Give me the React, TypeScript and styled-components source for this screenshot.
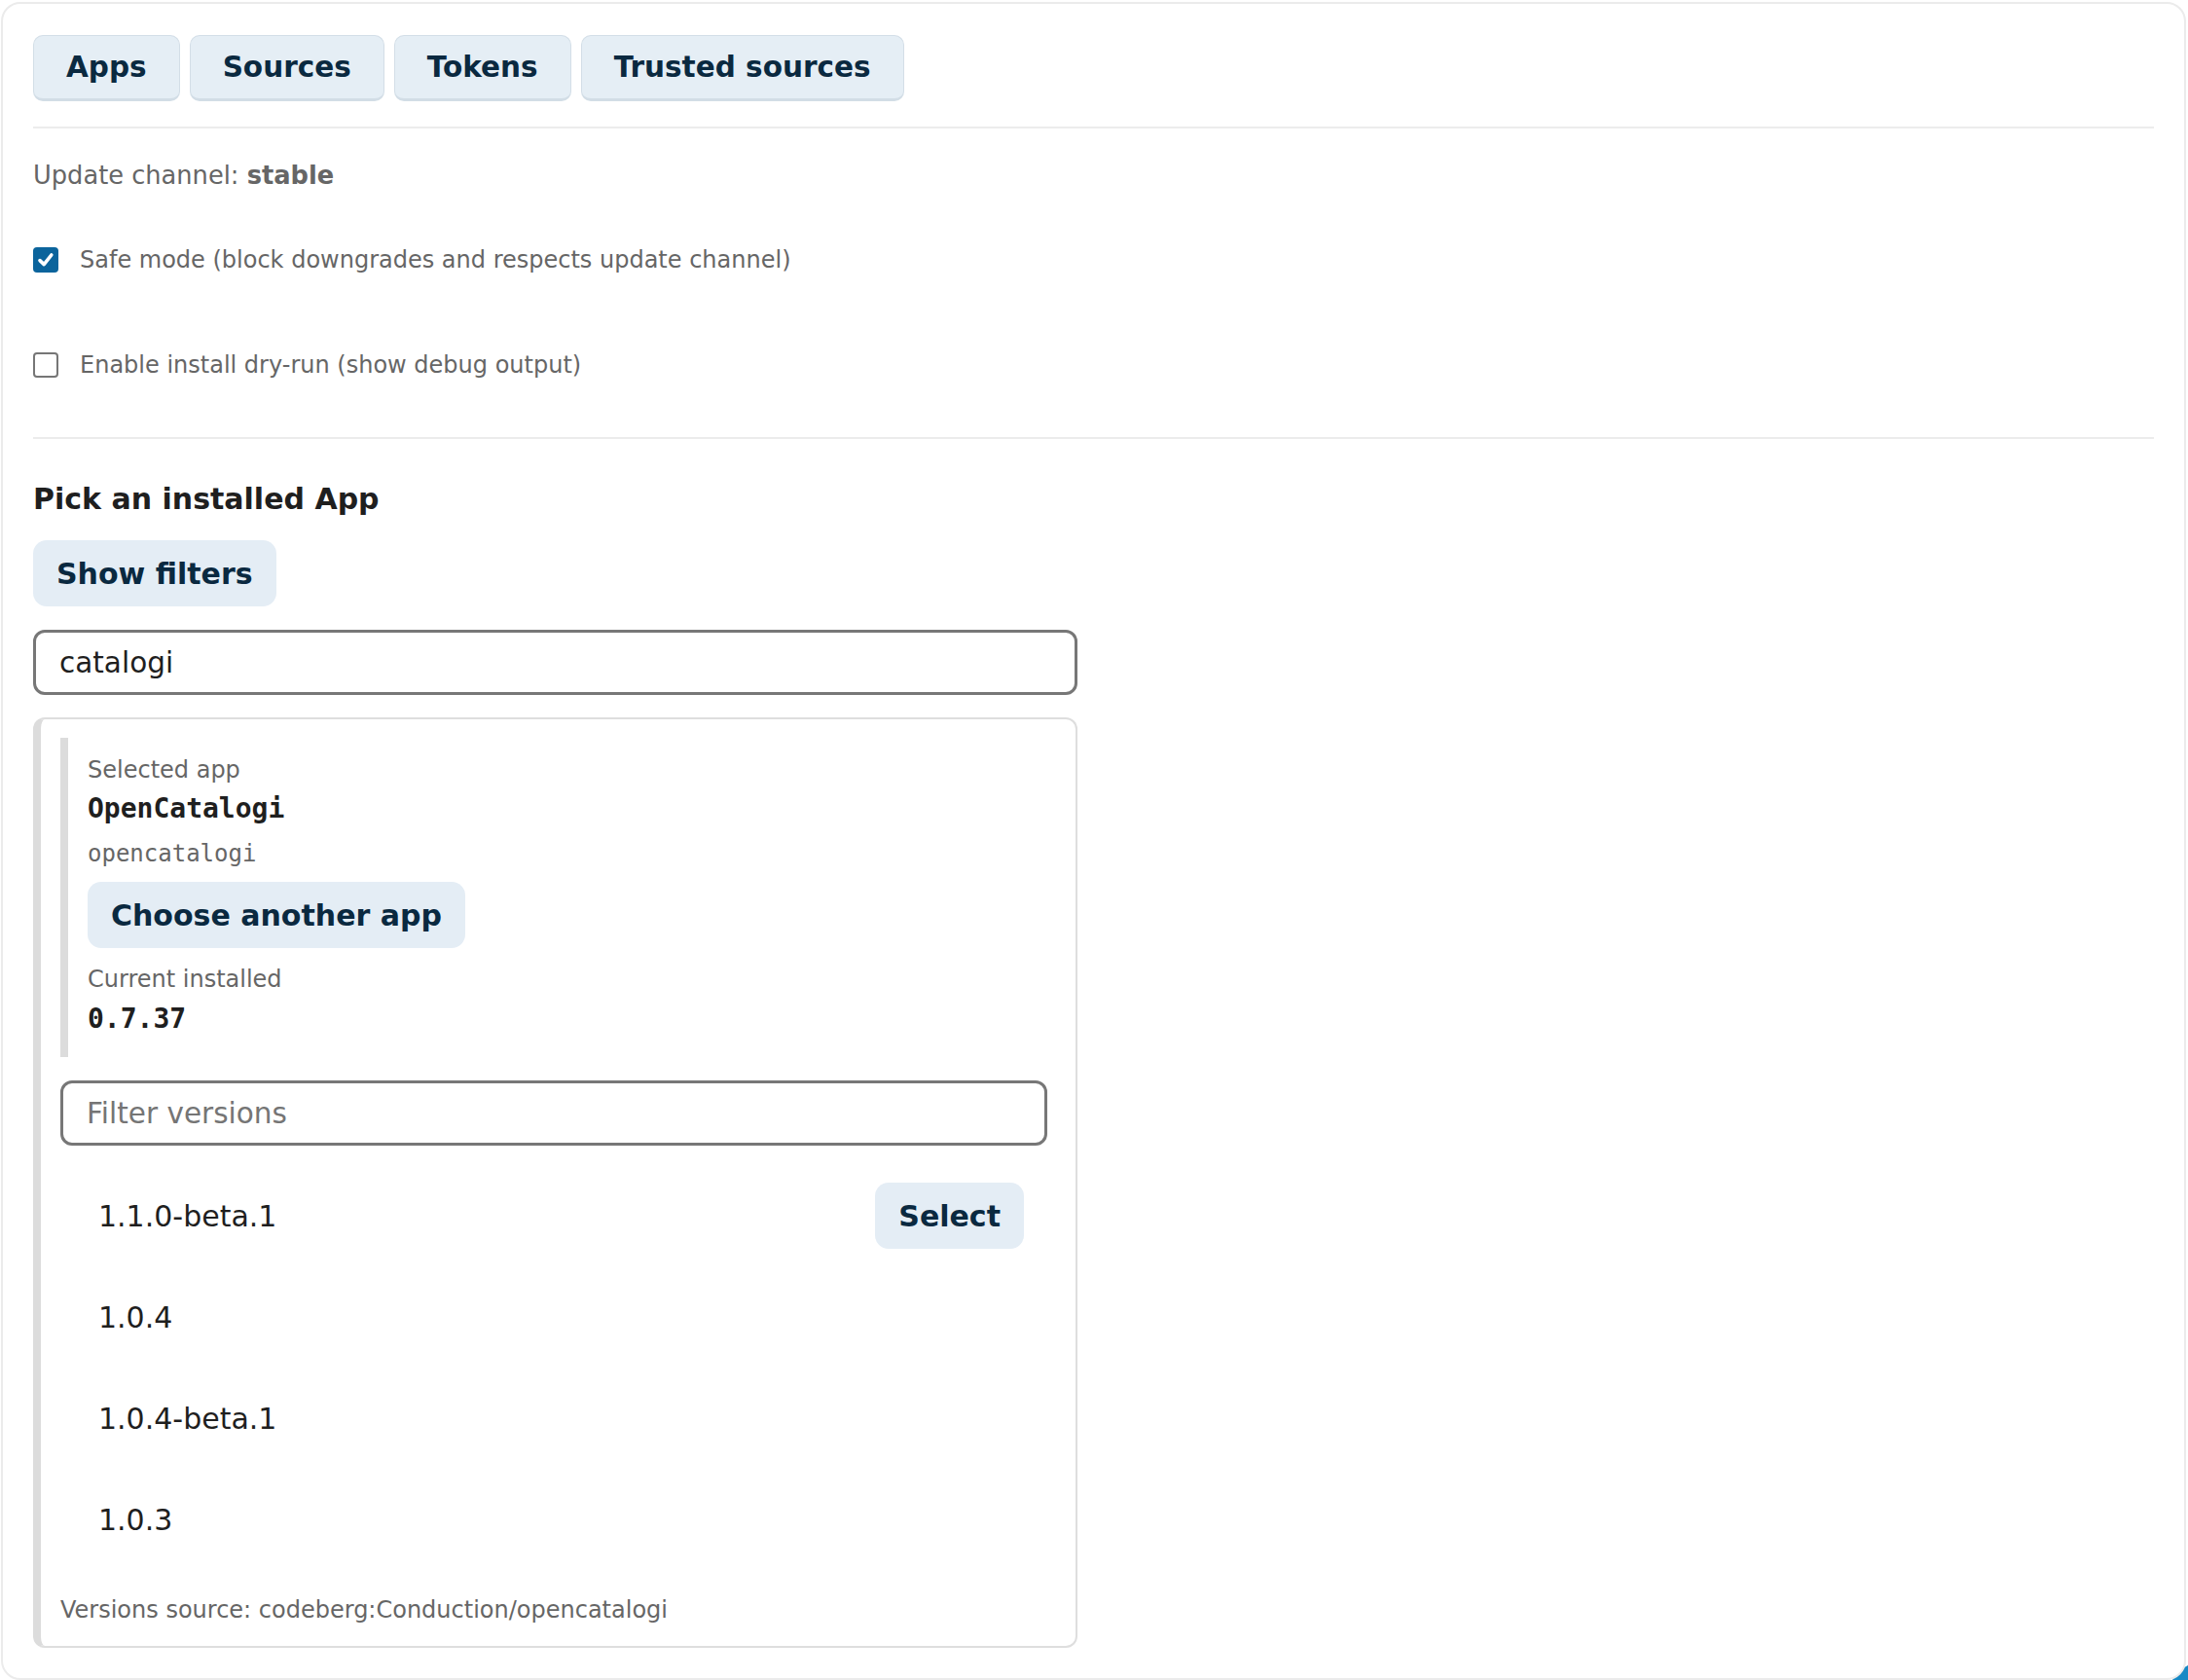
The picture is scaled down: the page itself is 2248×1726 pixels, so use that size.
import React, { useState } from "react";
import styled, { createGlobalStyle } from "styled-components";

const GlobalStyle = createGlobalStyle`
  html, body {
    margin: 0;
    padding: 0;
    background: #ffffff;
  }
  body {
    font-family: "DejaVu Sans", Verdana, sans-serif;
    color: #1f1f1f;
  }
  * { box-sizing: border-box; }
`;

const Page = styled.div`
  padding: 2px 2px 2px 1px;
`;

const Panel = styled.section`
  position: relative;
  z-index: 1;
  background: #ffffff;
  border: 2px solid #ebebeb;
  border-radius: 20px;
  padding: 32px 31px 31px 31px;
  display: flex;
  flex-direction: column;
  align-items: flex-start;
`;

const TabBar = styled.nav`
  display: flex;
  gap: 10px;
`;

const Tab = styled.button`
  height: 68px;
  padding: 0 33px;
  border: 1px solid #d3dee7;
  border-bottom-width: 3px;
  border-bottom-color: #d2dde6;
  border-radius: 10px;
  background: #e5eef5;
  color: #0a2940;
  font-family: "DejaVu Sans", sans-serif;
  font-weight: 700;
  font-size: 29.5px;
  cursor: pointer;
`;

const Rule = styled.hr<{ $gap: number }>`
  align-self: stretch;
  margin: ${(p) => p.$gap}px 0 0;
  border: none;
  height: 2px;
  background: #ececec;
`;

const ChannelLine = styled.p`
  margin: 29px 0 0;
  font-size: 25.7px;
  line-height: 38px;
  color: #666666;
  strong { font-weight: 700; }
`;

const CheckRow = styled.label<{ $gap: number }>`
  margin-top: ${(p) => p.$gap}px;
  display: flex;
  align-items: center;
  gap: 22px;
  font-size: 24px;
  line-height: 36px;
  color: #666666;
  cursor: pointer;
`;

const HiddenInput = styled.input`
  position: absolute;
  opacity: 0;
  width: 0;
  height: 0;
`;

const Box = styled.span<{ $on: boolean }>`
  width: 26px;
  height: 26px;
  border-radius: 4px;
  display: inline-flex;
  align-items: center;
  justify-content: center;
  background: ${(p) => (p.$on ? "#0b649c" : "#ffffff")};
  border: ${(p) => (p.$on ? "none" : "2px solid #767676")};
`;

const Heading = styled.h2`
  margin: 42px 0 0;
  font-size: 30px;
  line-height: 39px;
  font-weight: 700;
  color: #1f1f1f;
`;

const SoftButton = styled.button<{ $gap?: number }>`
  margin-top: ${(p) => p.$gap ?? 0}px;
  height: 68px;
  padding: 0 24px;
  border: none;
  border-radius: 14px;
  background: #e4edf5;
  color: #0a2940;
  font-family: "DejaVu Sans", sans-serif;
  font-weight: 700;
  font-size: 30px;
  cursor: pointer;
  flex-shrink: 0;
`;

const TextField = styled.input<{ $gap: number; $wide?: boolean }>`
  margin-top: ${(p) => p.$gap}px;
  width: ${(p) => (p.$wide ? "1073px" : "100%")};
  height: 67px;
  border: 3px solid #777777;
  border-radius: 12px;
  padding: 0 24px;
  font-family: "DejaVu Sans", sans-serif;
  font-size: 29.5px;
  color: #1f1f1f;
  background: #ffffff;
  outline: none;
  &::placeholder { color: #757575; }
`;

const AppCard = styled.div`
  margin-top: 23px;
  width: 1073px;
  border: 2px solid #dedede;
  border-left: 8px solid #dcdcdc;
  border-radius: 12px;
  padding: 19px 29px 19px 20px;
  display: flex;
  flex-direction: column;
`;

const SelectedBlock = styled.div`
  border-left: 8px solid #dcdcdc;
  padding: 15px 0 18px 20px;
  display: flex;
  flex-direction: column;
  align-items: flex-start;
`;

const MetaLabel = styled.div<{ $gap?: number }>`
  margin-top: ${(p) => p.$gap ?? 0}px;
  font-size: 24px;
  line-height: 36px;
  color: #666666;
`;

const MonoStrong = styled.code<{ $gap?: number }>`
  margin-top: ${(p) => p.$gap ?? 0}px;
  font-family: "DejaVu Sans Mono", monospace;
  font-weight: 700;
  font-size: 28px;
  line-height: 42px;
  color: #1f1f1f;
`;

const MonoMuted = styled.code`
  margin-top: 7px;
  font-family: "DejaVu Sans Mono", monospace;
  font-size: 24px;
  line-height: 36px;
  color: #666666;
`;

const VersionList = styled.ul`
  list-style: none;
  margin: 20px 0 0;
  padding: 0;
`;

const VersionRow = styled.li`
  height: 104px;
  padding: 0 24px 0 39px;
  display: flex;
  align-items: center;
  justify-content: space-between;
  font-size: 30px;
  color: #1f1f1f;
`;

const SourceNote = styled.div`
  margin-top: 23px;
  font-size: 24px;
  line-height: 36px;
  color: #666666;
`;

const CornerBubble = styled.div`
  position: fixed;
  right: -67px;
  bottom: -69px;
  width: 90px;
  height: 90px;
  border-radius: 50%;
  background: #1689c5;
  z-index: 0;
`;

const tabs = ["Apps", "Sources", "Tokens", "Trusted sources"];
const versions = ["1.1.0-beta.1", "1.0.4", "1.0.4-beta.1", "1.0.3"];

function CheckIcon() {
  return (
    <svg width="20" height="20" viewBox="0 0 20 20" aria-hidden="true">
      <path
        d="M4 10.6 L8.2 14.6 L15.8 5"
        fill="none"
        stroke="#ffffff"
        strokeWidth="3.6"
        strokeLinecap="round"
        strokeLinejoin="round"
      />
    </svg>
  );
}

function Toggle({
  label,
  checked,
  onChange,
  gap,
}: {
  label: string;
  checked: boolean;
  onChange: (v: boolean) => void;
  gap: number;
}) {
  return (
    <CheckRow $gap={gap}>
      <HiddenInput
        type="checkbox"
        checked={checked}
        onChange={(e) => onChange(e.target.checked)}
      />
      <Box $on={checked}>{checked && <CheckIcon />}</Box>
      {label}
    </CheckRow>
  );
}

export default function App() {
  const [safeMode, setSafeMode] = useState(true);
  const [dryRun, setDryRun] = useState(false);
  const [query, setQuery] = useState("catalogi");
  const [versionFilter, setVersionFilter] = useState("");

  return (
    <Page>
      <GlobalStyle />
      <Panel>
        <TabBar>
          {tabs.map((t) => (
            <Tab key={t}>{t}</Tab>
          ))}
        </TabBar>
        <Rule $gap={26} />
        <ChannelLine>
          Update channel: <strong>stable</strong>
        </ChannelLine>
        <Toggle
          gap={50}
          label="Safe mode (block downgrades and respects update channel)"
          checked={safeMode}
          onChange={setSafeMode}
        />
        <Toggle
          gap={72}
          label="Enable install dry-run (show debug output)"
          checked={dryRun}
          onChange={setDryRun}
        />
        <Rule $gap={56} />
        <Heading>Pick an installed App</Heading>
        <SoftButton $gap={23}>Show filters</SoftButton>
        <TextField
          $gap={24}
          $wide
          value={query}
          onChange={(e) => setQuery(e.target.value)}
        />
        <AppCard>
          <SelectedBlock>
            <MetaLabel>Selected app</MetaLabel>
            <MonoStrong $gap={1}>OpenCatalogi</MonoStrong>
            <MonoMuted>opencatalogi</MonoMuted>
            <SoftButton $gap={11}>Choose another app</SoftButton>
            <MetaLabel $gap={14}>Current installed</MetaLabel>
            <MonoStrong $gap={2}>0.7.37</MonoStrong>
          </SelectedBlock>
          <TextField
            $gap={24}
            placeholder="Filter versions"
            value={versionFilter}
            onChange={(e) => setVersionFilter(e.target.value)}
          />
          <VersionList>
            {versions.map((v, i) => (
              <VersionRow key={v}>
                <span>{v}</span>
                {i === 0 && <SoftButton>Select</SoftButton>}
              </VersionRow>
            ))}
          </VersionList>
          <SourceNote>Versions source: codeberg:Conduction/opencatalogi</SourceNote>
        </AppCard>
      </Panel>
      <CornerBubble />
    </Page>
  );
}
